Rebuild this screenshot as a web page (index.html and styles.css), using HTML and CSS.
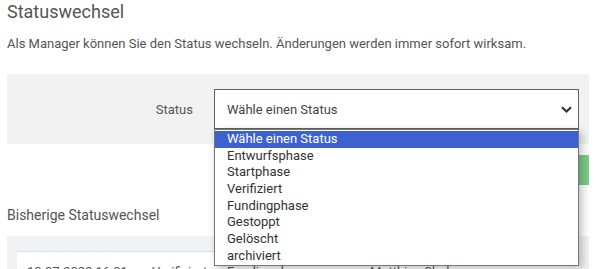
FILE: index.html
```html
<!DOCTYPE html>
<html lang="de">
<head>
    <meta charset="UTF-8">
    <meta name="viewport" content="width=device-width, initial-scale=1.0">
    <title>Statuswechsel</title>
    <link rel="stylesheet" href="styles.css">
</head>
<body>
    <div class="container">
        <h1>Statuswechsel</h1>
        <p class="intro">Als Manager können Sie den Status wechseln. Änderungen werden immer sofort wirksam.</p>

        <div class="status-panel">
            <label class="status-label">Status</label>
            <div class="select-wrap">
                <div class="select-box">
                    <span>Wähle einen Status</span>
                    <svg class="chevron" width="11" height="7" viewBox="0 0 11 7">
                        <path d="M1 1.2 L5.5 5.5 L10 1.2" fill="none" stroke="#333" stroke-width="2.2"/>
                    </svg>
                </div>
                <ul class="select-menu">
                    <li class="active">Wähle einen Status</li>
                    <li>Entwurfsphase</li>
                    <li>Startphase</li>
                    <li>Verifiziert</li>
                    <li>Fundingphase</li>
                    <li>Gestoppt</li>
                    <li>Gelöscht</li>
                    <li>archiviert</li>
                </ul>
            </div>
        </div>

        <div class="actions">
            <button class="save-button">Status ändern</button>
        </div>

        <h2>Bisherige Statuswechsel</h2>
        <div class="history-panel">
            <div class="history-card">
                <div class="history-row">
                    <span>10.07.2022 16:01</span>
                    <span>Verifiziert</span>
                    <span>Fundingphase</span>
                    <span>Matthias Shaler</span>
                </div>
            </div>
        </div>
    </div>
</body>
</html>
```

FILE: styles.css
```css
body {
    font-family: Roboto, "Liberation Sans", Arial, sans-serif;
    margin: 0;
    padding: 0;
    background-color: #fff;
    color: #555;
}

.container {
    padding: 0 7px;
}

h1 {
    margin: 0;
    padding-top: 1px;
    font-size: 18px;
    line-height: 22px;
    font-weight: 400;
    color: #555;
}

.intro {
    margin: 12px 0 0;
    font-size: 13px;
    line-height: 18px;
}

.status-panel {
    margin-top: 21px;
    padding: 15px 10px 15px 0;
    background-color: #f2f2f2;
    display: grid;
    grid-template-columns: 207px 1fr;
    align-items: center;
}

.status-label {
    text-align: right;
    padding-right: 21px;
    font-size: 13px;
    color: #555;
}

.select-wrap {
    position: relative;
}

.select-box {
    box-sizing: border-box;
    height: 40px;
    border: 1px solid #5b6168;
    background-color: #fff;
    display: flex;
    align-items: center;
    justify-content: space-between;
    padding: 0 6px 0 12px;
    font-size: 13px;
    color: #444;
}

.chevron {
    margin-top: 1px;
}

.select-menu {
    position: absolute;
    top: 100%;
    left: 0;
    right: 0;
    margin: 0;
    padding: 1px 0 0;
    list-style: none;
    background-color: #fff;
    border: 1px solid #777;
    box-shadow: 3px 3px 8px rgba(0, 0, 0, 0.25);
    z-index: 10;
}

.select-menu li {
    height: 16.7px;
    line-height: 16.7px;
    padding-left: 12px;
    font-size: 13px;
    color: #333;
}

.select-menu li.active {
    background-color: #3d62cf;
    color: #fff;
}

.actions {
    display: flex;
    justify-content: flex-end;
    margin-top: 11px;
}

.save-button {
    height: 30px;
    padding: 0 20px;
    background-color: #7bcb86;
    color: #fff;
    border: none;
    font-family: inherit;
    font-size: 13px;
}

h2 {
    margin: 20px 0 0;
    font-size: 14px;
    line-height: 20px;
    font-weight: 400;
    color: #555;
}

.history-panel {
    margin-top: 11px;
    padding: 15px 10px;
    background-color: #f1f2f4;
}

.history-card {
    background-color: #fff;
    border-top: 1px solid #dcdde0;
    padding: 11px 10px;
}

.history-row {
    display: grid;
    grid-template-columns: 125px 75px 143px 1fr;
    font-size: 13px;
    line-height: 18px;
    color: #555;
}
```
